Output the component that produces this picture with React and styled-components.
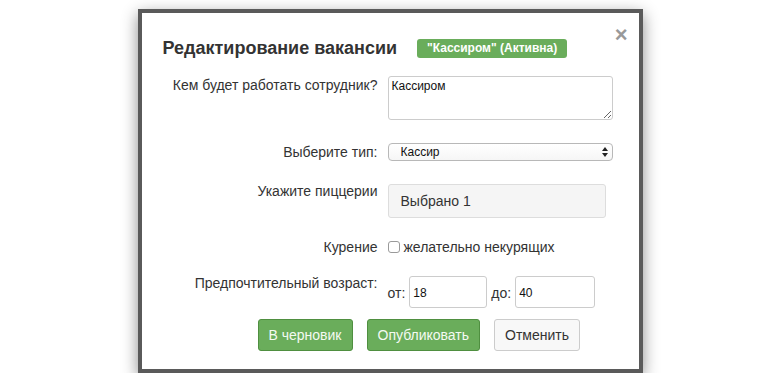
import React from "react";
import styled, { createGlobalStyle } from "styled-components";

const GlobalStyle = createGlobalStyle`
  body {
    margin: 0;
    background: #ffffff;
    font-family: "Liberation Sans", Arial, sans-serif;
    color: #333333;
  }
`;

const Page = styled.div`
  display: flex;
  justify-content: center;
  padding-top: 9px;
`;

const Modal = styled.div`
  position: relative;
  width: 505px;
  background: #ffffff;
  border: 4px solid #5a5a5a;
  box-shadow: 0 5px 15px rgba(0, 0, 0, 0.45);
  padding: 0 25px 18px 0;
  box-sizing: border-box;
`;

const Header = styled.div`
  display: flex;
  align-items: flex-start;
  gap: 20px;
  padding: 24px 0 0 21px;
  height: 63px;
  box-sizing: border-box;
`;

const Title = styled.h4`
  margin: 0;
  font-size: 18px;
  line-height: 22px;
  font-weight: bold;
  color: #333333;
`;

const Badge = styled.span`
  margin-top: 2px;
  display: inline-block;
  background: #6aad5b;
  color: #ffffff;
  font-size: 12px;
  font-weight: bold;
  line-height: 19px;
  padding: 0 10px;
  border-radius: 3px;
`;

const Close = styled.span`
  position: absolute;
  top: 11px;
  right: 11px;
  font-size: 22px;
  font-weight: bold;
  color: #999999;
  line-height: 22px;
`;

const Row = styled.div`
  display: grid;
  grid-template-columns: 236px 1fr;
  column-gap: 10px;
  align-items: ${(p) => (p.$center ? "center" : "start")};
  margin-bottom: ${(p) => p.$gap || 0}px;
`;

const Label = styled.div`
  text-align: right;
  font-size: 14px;
  line-height: 20px;
  color: #333333;
  margin-top: ${(p) => p.$shift || 0}px;
`;

const TextArea = styled.textarea`
  width: 225px;
  height: 44px;
  box-sizing: border-box;
  border: 1px solid #cccccc;
  border-radius: 3px;
  padding: 2px 3px;
  font-family: "Liberation Sans", Arial, sans-serif;
  font-size: 12px;
  color: #111111;
  margin: 0;
  display: block;
`;

const SelectWrap = styled.div`
  position: relative;
  width: 225px;
`;

const Select = styled.select`
  appearance: none;
  width: 100%;
  height: 18px;
  box-sizing: border-box;
  border: 1px solid #b8b8b8;
  border-radius: 4px;
  background: linear-gradient(#ffffff, #f6f6f6);
  padding: 0 0 0 12px;
  font-family: "Liberation Sans", Arial, sans-serif;
  font-size: 12px;
  color: #111111;
  display: block;
`;

const Arrows = styled.svg`
  position: absolute;
  right: 5px;
  top: 4px;
  pointer-events: none;
`;

const Chosen = styled.div`
  width: 218px;
  height: 34px;
  box-sizing: border-box;
  border: 1px solid #dddddd;
  border-radius: 3px;
  background: #f5f5f5;
  padding-left: 12px;
  font-size: 14px;
  line-height: 32px;
  color: #333333;
`;

const CheckLine = styled.label`
  display: flex;
  align-items: center;
  gap: 4px;
  font-size: 14px;
  line-height: 20px;
  color: #333333;
`;

const Check = styled.input`
  appearance: none;
  margin: 0;
  width: 12px;
  height: 12px;
  border: 1px solid #9a9a9a;
  border-radius: 3px;
  background: #ffffff;
`;

const Ages = styled.div`
  display: flex;
  align-items: center;
  gap: 4px;
  font-size: 14px;
  color: #333333;
`;

const AgeText = styled.span`
  margin-top: 2px;
`;

const AgeInput = styled.input`
  width: ${(p) => p.$w}px;
  height: 32px;
  box-sizing: border-box;
  border: 1px solid #cccccc;
  border-radius: 3px;
  padding: 2px 3px 0;
  font-family: "Liberation Sans", Arial, sans-serif;
  font-size: 12px;
  color: #111111;
  margin: 0;
`;

const Buttons = styled.div`
  display: flex;
  gap: 14px;
  padding-left: 116px;
`;

const Button = styled.button`
  height: 32px;
  padding: 0 10px;
  border-radius: 3px;
  font-family: "Liberation Sans", Arial, sans-serif;
  font-size: 14px;
  border: 1px solid ${(p) => (p.$green ? "#4f8f40" : "#cccccc")};
  background: ${(p) => (p.$green ? "#6aad5b" : "#f8f8f8")};
  color: ${(p) => (p.$green ? "#f4faf2" : "#333333")};
`;

export default function App() {
  return (
    <>
      <GlobalStyle />
      <Page>
        <Modal>
          <Close>×</Close>
          <Header>
            <Title>Редактирование вакансии</Title>
            <Badge>"Кассиром" (Активна)</Badge>
          </Header>
          <Row $gap={22}>
            <Label $shift={-1}>Кем будет работать сотрудник?</Label>
            <TextArea defaultValue="Кассиром" />
          </Row>
          <Row $center $gap={22}>
            <Label>Выберите тип:</Label>
            <SelectWrap>
              <Select defaultValue="cashier">
                <option value="cashier">Кассир</option>
              </Select>
              <Arrows width="6" height="10" viewBox="0 0 6 10">
                <path d="M3 0 L6 4 L0 4 Z M3 10 L6 6 L0 6 Z" fill="#222" />
              </Arrows>
            </SelectWrap>
          </Row>
          <Row $gap={19}>
            <Label $shift={-3}>Укажите пиццерии</Label>
            <Chosen>Выбрано 1</Chosen>
          </Row>
          <Row $center $gap={19}>
            <Label>Курение</Label>
            <CheckLine>
              <Check type="checkbox" />
              желательно некурящих
            </CheckLine>
          </Row>
          <Row $gap={11}>
            <Label $shift={-3}>Предпочтительный возраст:</Label>
            <Ages>
              <AgeText>от:</AgeText>
              <AgeInput $w={78} defaultValue="18" />
              <AgeText>до:</AgeText>
              <AgeInput $w={80} defaultValue="40" />
            </Ages>
          </Row>
          <Buttons>
            <Button $green>В черновик</Button>
            <Button $green>Опубликовать</Button>
            <Button>Отменить</Button>
          </Buttons>
        </Modal>
      </Page>
    </>
  );
}
